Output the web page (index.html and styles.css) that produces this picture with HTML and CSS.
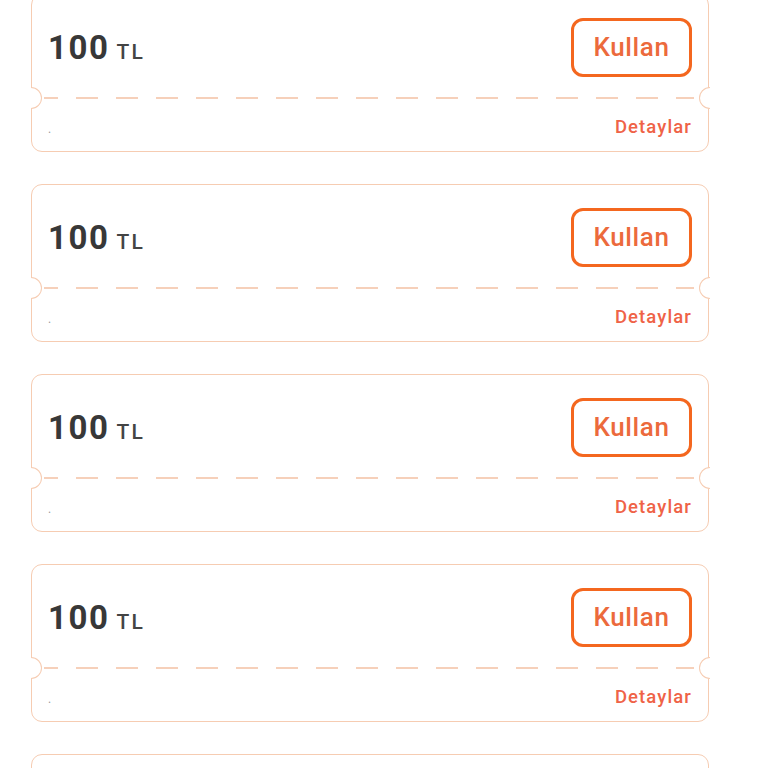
FILE: index.html
```html
<!DOCTYPE html>
<html lang="tr">
<head>
<meta charset="utf-8">
<title>Kuponlar</title>
<link rel="stylesheet" href="styles.css">
</head>
<body>
<div class="list">
  <div class="coupon">
    <div class="coupon-top">
      <div class="amount"><span class="value">100</span><span class="unit">TL</span></div>
      <button class="use-btn">Kullan</button>
    </div>
    <div class="divider"></div>
    <div class="coupon-bottom">
      <span class="note">.</span>
      <a class="details">Detaylar</a>
    </div>
  </div>
  <div class="coupon">
    <div class="coupon-top">
      <div class="amount"><span class="value">100</span><span class="unit">TL</span></div>
      <button class="use-btn">Kullan</button>
    </div>
    <div class="divider"></div>
    <div class="coupon-bottom">
      <span class="note">.</span>
      <a class="details">Detaylar</a>
    </div>
  </div>
  <div class="coupon">
    <div class="coupon-top">
      <div class="amount"><span class="value">100</span><span class="unit">TL</span></div>
      <button class="use-btn">Kullan</button>
    </div>
    <div class="divider"></div>
    <div class="coupon-bottom">
      <span class="note">.</span>
      <a class="details">Detaylar</a>
    </div>
  </div>
  <div class="coupon">
    <div class="coupon-top">
      <div class="amount"><span class="value">100</span><span class="unit">TL</span></div>
      <button class="use-btn">Kullan</button>
    </div>
    <div class="divider"></div>
    <div class="coupon-bottom">
      <span class="note">.</span>
      <a class="details">Detaylar</a>
    </div>
  </div>
  <div class="coupon">
    <div class="coupon-top">
      <div class="amount"><span class="value">100</span><span class="unit">TL</span></div>
      <button class="use-btn">Kullan</button>
    </div>
    <div class="divider"></div>
    <div class="coupon-bottom">
      <span class="note">.</span>
      <a class="details">Detaylar</a>
    </div>
  </div>
</div>
</body>
</html>
```
FILE: styles.css
```css
html, body {
  margin: 0;
  padding: 0;
  background: #ffffff;
  font-family: Roboto, "Liberation Sans", Arial, sans-serif;
  overflow: hidden;
  height: 768px;
}

.list {
  display: flex;
  flex-direction: column;
  gap: 32px;
  width: 678px;
  margin: -6px 0 0 31px;
}

.coupon {
  position: relative;
  box-sizing: border-box;
  height: 158px;
  border: 1.5px solid #f6ccb2;
  border-radius: 11px;
  background: #ffffff;
  display: flex;
  flex-direction: column;
}

.coupon::before,
.coupon::after {
  content: "";
  position: absolute;
  top: 92px;
  width: 11px;
  height: 22px;
  box-sizing: border-box;
  background: #ffffff;
  border: 1.5px solid #f6ccb2;
}

.coupon::before {
  left: -1.5px;
  border-left: none;
  border-radius: 0 11px 11px 0;
}

.coupon::after {
  right: -1.5px;
  border-right: none;
  border-radius: 11px 0 0 11px;
}

.coupon-top {
  height: 102px;
  display: flex;
  align-items: center;
  justify-content: space-between;
  padding: 2px 16px 0 16px;
  box-sizing: border-box;
}

.amount {
  display: flex;
  align-items: baseline;
  gap: 7px;
  color: #383838;
}

.value {
  font-size: 33px;
  font-weight: 700;
  letter-spacing: 1.6px;
}

.unit {
  font-size: 21px;
  font-weight: 500;
  letter-spacing: 2px;
  color: #444444;
}

.use-btn {
  width: 121px;
  height: 59px;
  box-sizing: border-box;
  border: 3px solid #f4671f;
  border-radius: 12px;
  background: #ffffff;
  color: #ec6a3c;
  font-family: Roboto, "Liberation Sans", Arial, sans-serif;
  font-size: 26px;
  font-weight: 500;
  letter-spacing: 0.6px;
  padding: 0;
}

.divider {
  height: 1.5px;
  margin: 0 14px 0 12px;
  background-image: repeating-linear-gradient(to right, #f6d0ba 0 22px, transparent 22px 40px);
  background-position: -8px 0;
}

.coupon-bottom {
  flex: 1;
  display: flex;
  align-items: center;
  justify-content: space-between;
  padding: 5px 16px 0 16px;
}

.note {
  font-size: 12px;
  color: #9a9a9a;
  align-self: center;
  margin-top: 4px;
}

.details {
  font-size: 18.5px;
  font-weight: 500;
  color: #ef6347;
  letter-spacing: 1.1px;
}
```
